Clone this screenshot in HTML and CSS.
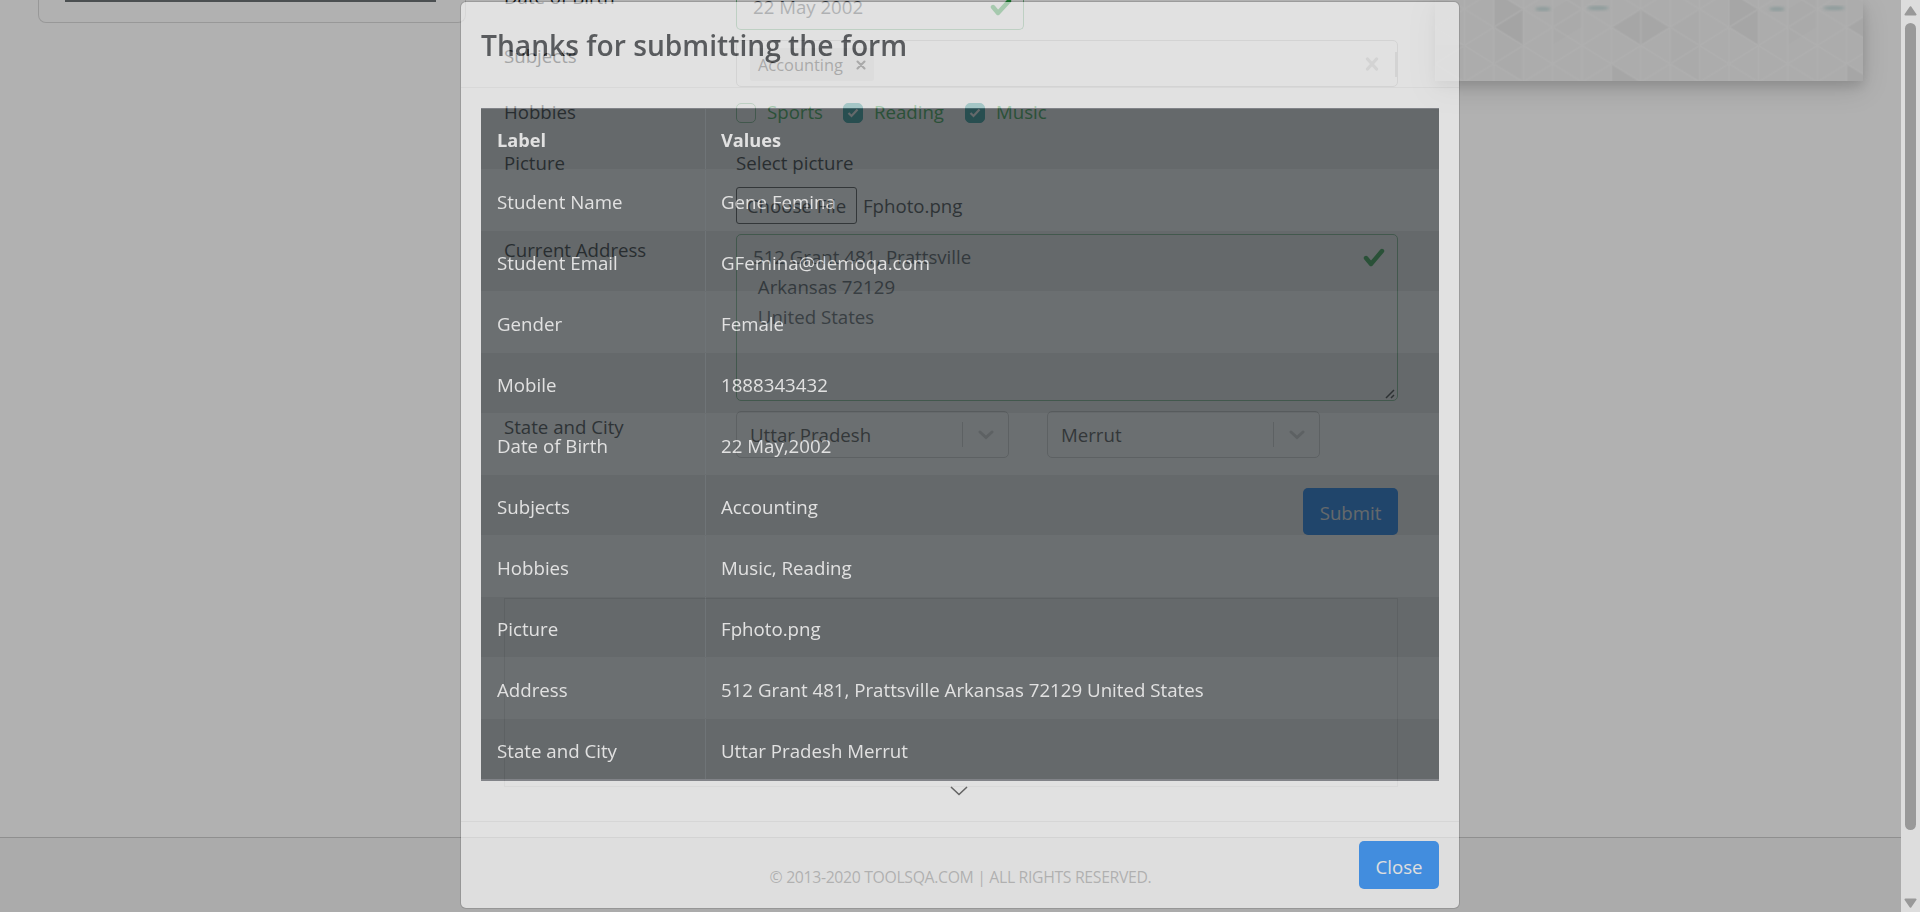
FILE: index.html
```html
<!DOCTYPE html>
<html lang="en">
<head>
<meta charset="utf-8">
<title>Practice Form</title>
<link rel="stylesheet" href="styles.css">
</head>
<body>
<div class="page">
  <main class="content">
    <aside class="sidebar"><div class="sidebar-bar"></div></aside>
    <form class="form">
      <div class="row row-dob">
        <label class="label">Date of Birth</label>
        <div class="control date"><span>22 May 2002</span>
          <svg class="date-check" width="22" height="18" viewBox="0 0 22 18"><path d="M3 9l5 6L19 3" fill="none" stroke="#28a745" stroke-width="4.4" stroke-linejoin="round" stroke-linecap="round"/></svg>
        </div>
      </div>
      <div class="row row-subjects">
        <label class="label">Subjects</label>
        <div class="control multi">
          <div class="chip"><span class="t-acc">Accounting</span><svg width="10" height="10" viewBox="0 0 10 10"><path d="M1.5 1.5l7 7M8.500 1.500l-7 7" stroke="#333" stroke-width="2.100" stroke-linecap="round"/></svg></div>
          <svg class="clear" width="14" height="14" viewBox="0 0 14 14"><path d="M2.500 2l9 10M11.500 2l-9 10" stroke="#ccc" stroke-width="3.200" stroke-linecap="round"/></svg>
          <span class="multi-sep"></span>
        </div>
      </div>
      <div class="row row-hobbies">
        <label class="label">Hobbies</label>
        <div class="checks">
          <span class="box"></span><span class="check-label sports">Sports</span>
          <span class="box on"><svg width="12" height="10" viewBox="0 0 12 10"><path d="M1.500 5l3 3L10.500 1.500" fill="none" stroke="#fff" stroke-width="2.200"/></svg></span><span class="check-label reading">Reading</span>
          <span class="box on"><svg width="12" height="10" viewBox="0 0 12 10"><path d="M1.500 5l3 3L10.500 1.500" fill="none" stroke="#fff" stroke-width="2.200"/></svg></span><span class="check-label">Music</span>
        </div>
      </div>
      <div class="row row-picture">
        <label class="label">Picture</label>
        <div><div class="select-picture">Select picture</div>
          <div class="file"><span class="file-button">Choose File</span><span>Fphoto.png</span></div></div>
      </div>
      <div class="row row-address">
        <label class="label">Current Address</label>
        <div class="control area">
          <div class="area-text">512 Grant 481, Prattsville<br>&nbsp;Arkansas 72129<br>&nbsp;United States</div>
          <svg class="area-check" width="22" height="19" viewBox="0 0 22 19"><path d="M3 10l5 6L19 3" fill="none" stroke="#28a745" stroke-width="4.400" stroke-linejoin="round" stroke-linecap="round"/></svg>
          <svg class="grip" width="10" height="10" viewBox="0 0 10 10"><path d="M1 9L9 1M6 9l3-3" stroke="#333" stroke-width="1.500"/></svg>
        </div>
      </div>
      <div class="row row-state">
        <label class="label">State and City</label>
        <div class="selects">
          <div class="select"><span>Uttar Pradesh</span><i></i><svg width="16" height="10" viewBox="0 0 16 10"><path d="M2 2l6 5.500L14 2" fill="none" stroke="#ccc" stroke-width="3" stroke-linecap="round"/></svg></div>
          <div class="select"><span>Merrut</span><i></i><svg width="16" height="10" viewBox="0 0 16 10"><path d="M2 2l6 5.500L14 2" fill="none" stroke="#ccc" stroke-width="3" stroke-linecap="round"/></svg></div>
        </div>
      </div>
      <div class="submit-row"><span class="submit">Submit</span></div>
      <div class="frame"></div>
    </form>
    <aside class="banner">
      <svg width="428" height="81" viewBox="0 0 428 81">
        <defs>
          <pattern id="lattice" x="0" y="27.300" width="58.800" height="36.500" patternUnits="userSpaceOnUse">
            <path d="M0 0V36.500M29.400 0V36.500M58.800 0V36.500M0 0L29.400 18.250L58.800 0M0 36.500L29.400 18.250L58.800 36.500" fill="none" stroke="#ffffff" stroke-opacity=".55" stroke-width="1.800"/>
          </pattern>
          <filter id="soft"><feGaussianBlur stdDeviation="1.500"/></filter>
        </defs>
        <rect width="428" height="81" fill="#f8f8f8"/>
        <g fill="#000" fill-opacity=".03">
          <path d="M58.800 27.300L88.200 9V45.500zM58.800-9L88.200 9L58.800 27.300zM176.400 27.300L205.800 9V45.500zM205.800 9L235.200 27.300L205.800 45.500zM176.400 63.800L205.800 82H176.400z"/>
          <path d="M294 27.300L323.400 9V45.500zM294-9L323.400 9L294 27.300zM411.600 27.300L441 9V45.500zM411.600 63.800L441 82H411.600z"/>
        </g>
        <path d="M0 45h29.400v36H0zM88 9L58.800 27V64L88 81zM147-9V27L117.600 45V9zM264.600 9L235 27V64L264.600 81zM382-9V27L352.800 45V9z" fill="#000" fill-opacity=".01"/>
        <rect width="428" height="81" fill="url(#lattice)"/>
        <g fill="#5aa7a2" fill-opacity=".28" filter="url(#soft)"><ellipse cx="108" cy="9" rx="8" ry="2"/><ellipse cx="163" cy="8" rx="11" ry="2"/><ellipse cx="342" cy="9" rx="8" ry="2"/><ellipse cx="399" cy="8" rx="11" ry="2"/></g>
      </svg>
    </aside>
  </main>
  <footer class="page-footer"><span>© 2013-2020 TOOLSQA.COM | ALL RIGHTS RESERVED.</span></footer>
</div>
<div class="backdrop"></div>
<div class="scrollbar">
  <svg width="13" height="10" viewBox="0 0 13 10"><path d="M6.500 1.200L11.500 8.500h-10z" fill="#999" stroke="#999" stroke-width="2" stroke-linejoin="round"/></svg>
  <div class="thumb"></div>
  <svg width="13" height="10" viewBox="0 0 13 10"><path d="M6.500 8.800L11.500 1.500h-10z" fill="#999" stroke="#999" stroke-width="2" stroke-linejoin="round"/></svg>
</div>
<div class="modal">
  <header class="modal-header"><h4 class="modal-title">Thanks for submitting the form</h4></header>
  <div class="modal-body">
    <div class="table">
      <div class="tr th"><div>Label</div><div>Values</div></div>
      <div class="tr"><div>Student Name</div><div>Gene Femina</div></div>
      <div class="tr"><div>Student Email</div><div>GFemina@demoqa.com</div></div>
      <div class="tr"><div>Gender</div><div>Female</div></div>
      <div class="tr"><div>Mobile</div><div>1888343432</div></div>
      <div class="tr"><div>Date of Birth</div><div>22 May,2002</div></div>
      <div class="tr"><div>Subjects</div><div>Accounting</div></div>
      <div class="tr"><div>Hobbies</div><div>Music, Reading</div></div>
      <div class="tr"><div>Picture</div><div>Fphoto.png</div></div>
      <div class="tr"><div>Address</div><div>512 Grant 481, Prattsville Arkansas 72129 United States</div></div>
      <div class="tr"><div>State and City</div><div>Uttar Pradesh Merrut</div></div>
    </div>
    <svg class="more" width="18" height="10" viewBox="0 0 18 10"><path d="M1 1l8 7.500L17 1" fill="none" stroke="#333" stroke-width="1.600"/></svg>
  </div>
  <footer class="modal-footer"><span class="close">Close</span></footer>
</div>
</body>
</html>
```
FILE: styles.css
```css
* { box-sizing: border-box; }
body {
  margin: 0;
  height: 912px;
  overflow: hidden;
  background: #fff;
  color: #212529;
  font: 18.65px/30px "Open Sans", "Noto Sans", sans-serif;
}
.page { width: 1901px; height: 912px; display: flex; flex-direction: column; overflow: hidden; }
.content { height: 837px; flex: none; display: flex; align-items: flex-start; }
.sidebar {
  width: 428px; height: 23px; margin-left: 38px; padding: 0 29px 0 26px; flex: none;
  border: 1px solid #dcdcdc; border-top: 0; border-radius: 0 0 8px 8px;
}
.sidebar-bar { height: 2px; background: #6d7375; }
.form { width: 894px; margin-left: 38px; flex: none; }
.row { display: grid; grid-template-columns: 232px 662px; align-items: start; }
.control { border: 1px solid #ccc; border-radius: 5px; display: flex; }
.row-dob { height: 30px; }
.row-dob .label { margin-top: -18px; }
.row .date {
  width: 288px; height: 30px; padding: 0 11px 0 16px; justify-content: space-between;
  border-color: #7fc291; border-top: 0; border-radius: 0 0 5px 5px; color: #495057;
}
.date span { margin-top: -8px; }
.date-check { margin-top: -2px; }
.row-subjects { height: 68px; padding-top: 10px; }
.row-subjects .label { margin-top: 1px; }
.multi { height: 47px; padding: 7px 0 6px 13px; align-items: center; }
.chip {
  width: 124px; height: 33px; padding: 1px 8px 0 8px; background: #ececec; border-radius: 3px;
  display: flex; align-items: center; justify-content: space-between; font-size: 16.4px; color: #333;
}
.clear { margin-left: auto; }
.multi-sep { width: 2px; height: 25px; margin-left: 16px; background: #ccc; }
.row-hobbies { height: 50px; }
.row-hobbies .label, .checks { margin-top: -1px; }
.checks { display: flex; align-items: center; color: #28a745; }
.box {
  width: 20px; height: 20px; margin: 2px 11px 0 0; border: 1px solid #7fc291; border-radius: 5px;
  display: flex; align-items: center; justify-content: center;
}
.box.on { background: #1f9d9f; border-color: #1f9d9f; }
.sports { width: 76px; }
.reading { width: 91px; }
.row-picture { height: 86px; }
.file { height: 37px; margin-top: 9px; display: flex; align-items: center; gap: 6px; }
.file-button {
  width: 121px; height: 37px; line-height: 36px; border: 1px solid #333; border-radius: 3px;
  text-align: center; white-space: nowrap;
}
.row-address { height: 177px; }
.area {
  height: 167px; padding: 7px 12px 0 16px; border-color: #7fc291; color: #495057;
  justify-content: space-between; position: relative;
}
.area-check { margin-top: 6px; }
.grip { position: absolute; right: 2px; bottom: 1px; }
.row-state { height: 77px; }
.selects { display: flex; gap: 38px; }
.select {
  width: 273px; height: 47px; border: 1px solid #ccc; border-radius: 5px; padding: 0 14px 0 13px;
  display: flex; align-items: center; color: #333;
}
.select span { margin: 1px auto 0 0; }
.select i { width: 1px; height: 25px; background: #ccc; margin-right: 15px; }
.submit-row { display: flex; justify-content: flex-end; }
.submit {
  width: 95px; height: 47px; line-height: 49px; border-radius: 5px; background: #007bff;
  color: #fff; text-align: center;
}
.frame { height: 189px; margin-top: 63px; border: 1px solid #e2e2e2; }
.row-address .label, .row-state .label { margin-top: 1px; }
.banner {
  width: 428px; height: 81px; margin-left: 37px; flex: none;
  box-shadow: 0 5px 10px rgba(0, 0, 0, .1), 0 8px 25px rgba(0, 0, 0, .15);
}
.banner svg { display: block; }
.page-footer {
  height: 75px; padding-left: 20px; border-top: 1px solid #cfcfcf; background: #f6f6f6;
  display: flex; align-items: center; justify-content: center;
  font-size: 15.800px; letter-spacing: -.34px; color: #4c4c4c; white-space: nowrap;
}
.page-footer span { margin-top: 4px; }
.backdrop { position: absolute; inset: 0; background: rgba(0, 0, 0, .305); }
.scrollbar {
  position: absolute; top: 0; right: 0; width: 19px; height: 912px; padding: 6px 0 4px;
  background: #ddd; display: flex; flex-direction: column; align-items: center;
}
.thumb { width: 11px; height: 807px; margin: 7px 0 auto; border-radius: 6px; background: #999; }

.modal {
  position: absolute; left: 460px; top: 1px; width: 1000px; height: 908px; opacity: .615;
  background: #fff; background-clip: padding-box; border: 1px solid rgba(0, 0, 0, .2);
  border-radius: 6px; display: flex; flex-direction: column;
}
.modal-header { height: 86px; padding: 24px 20px 0; border-bottom: 1px solid #f0f0f0; }
.modal-title { margin: 0; font-size: 28.2px; line-height: 38px; font-weight: 600; color: #212529; white-space: nowrap; }
.modal-body { height: 733px; padding: 20px 20px 0; display: flex; flex-direction: column; align-items: center; }
.table { width: 958px; background: #353b3e; color: #fff; border-bottom: 2px solid #62666e; font-size: 18.7px; font-weight: 500; }
.tr { height: 61px; display: grid; grid-template-columns: 225px 1fr; border-top: 1px solid #3f4549; }
.tr > div { padding: 17px 0 0 16px; white-space: nowrap; }
.tr > div:first-child { border-right: 1px solid #454d52; }
.tr > div:last-child { padding-left: 15px; }
.tr:nth-child(even) { background: #3f4548; }
.tr.th { border-color: #62666e; font-size: 18.2px; font-weight: 700; }
.tr.th > div { padding-top: 16px; }
.more { margin: 5px 3px 0 0; }
.modal-footer { flex: 1; padding: 19px 20px 0; border-top: 1px solid #eee; display: flex; justify-content: flex-end; }
.close {
  width: 80px; height: 48px; line-height: 52px; border-radius: 5px; background: #007bff;
  color: #fff; text-align: center;
}
```
